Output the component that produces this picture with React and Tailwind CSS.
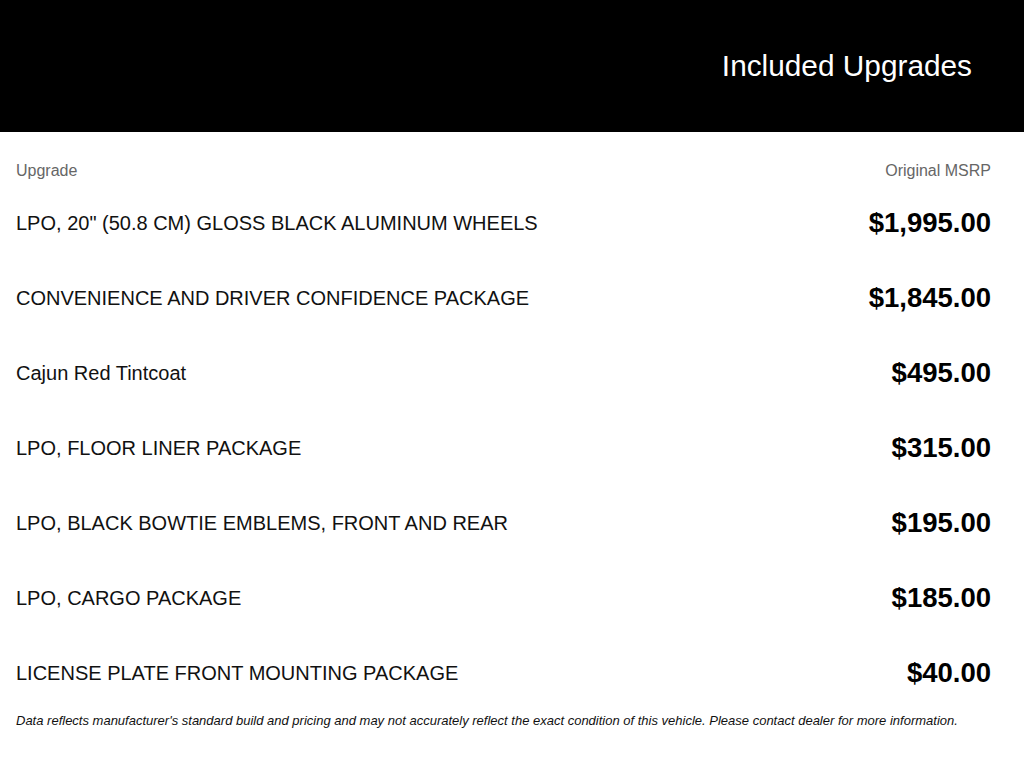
const upgrades = [
	{ name: 'LPO, 20" (50.8 CM) GLOSS BLACK ALUMINUM WHEELS', price: "$1,995.00" },
	{ name: "CONVENIENCE AND DRIVER CONFIDENCE PACKAGE", price: "$1,845.00" },
	{ name: "Cajun Red Tintcoat", price: "$495.00" },
	{ name: "LPO, FLOOR LINER PACKAGE", price: "$315.00" },
	{ name: "LPO, BLACK BOWTIE EMBLEMS, FRONT AND REAR", price: "$195.00" },
	{ name: "LPO, CARGO PACKAGE", price: "$185.00" },
	{ name: "LICENSE PLATE FRONT MOUNTING PACKAGE", price: "$40.00" },
];

export default function App() {
	return (
		<div className="w-[1024px] h-[768px] bg-white font-['Liberation_Sans',Arial,sans-serif]">
			<div className="h-[132px] bg-black flex items-center justify-end pr-[52px]">
				<h1 className="text-[29.8px] leading-none text-white">Included Upgrades</h1>
			</div>
			<div className="pl-4 pr-[33px]">
				<div className="flex justify-between pt-[29px] text-[16px] leading-[20px] text-[#666]">
					<span>Upgrade</span>
					<span>Original MSRP</span>
				</div>
				<div className="mt-[4px]">
					{upgrades.map((u) => (
						<div key={u.name} className="h-[75px] flex items-center justify-between">
							<span className="text-[20px] text-[#111]">{u.name}</span>
							<span className="text-[27.5px] leading-[30px] font-bold text-black">{u.price}</span>
						</div>
					))}
				</div>
				<p className="mt-[3px] text-[13px] leading-[15px] italic text-[#111]">
					Data reflects manufacturer's standard build and pricing and may not accurately reflect the exact condition of this vehicle. Please contact dealer for more information.
				</p>
			</div>
		</div>
	);
}
